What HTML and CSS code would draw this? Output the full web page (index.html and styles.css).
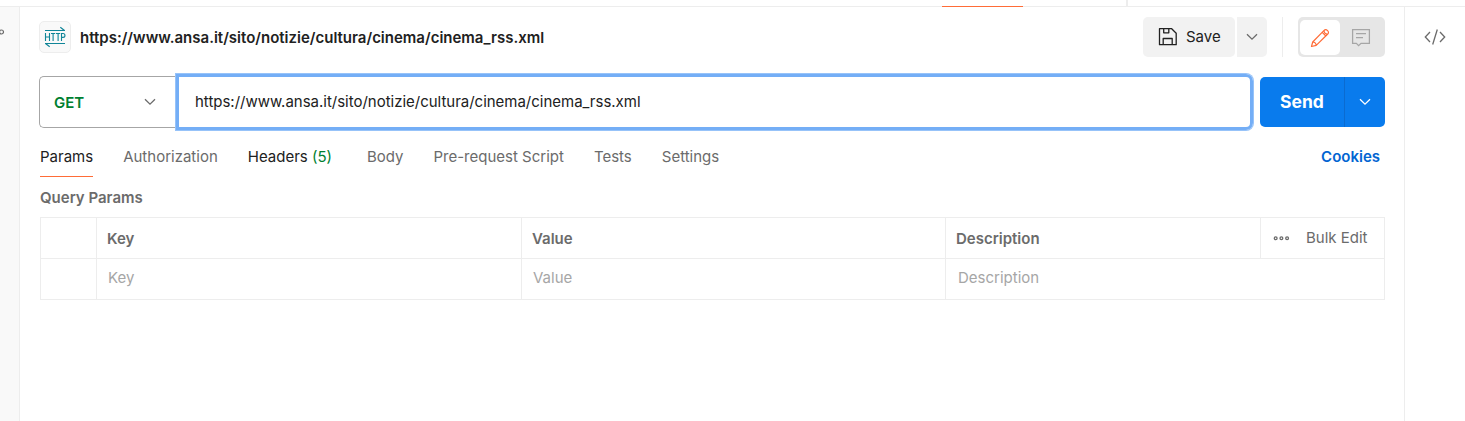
FILE: index.html
```html
<!DOCTYPE html>
<html lang="en">
<head>
<meta charset="utf-8">
<title>Request</title>
<link rel="stylesheet" href="styles.css">
</head>
<body>
<div class="app">
  <div class="tabstrip">
    <span class="tabstrip-active"></span>
    <span class="tabstrip-divider"></span>
  </div>
  <div class="workspace">
    <aside class="sidebar">
      <svg class="sidebar-icon" width="6" height="8" viewBox="0 0 6 8"><circle cx="1.5" cy="4" r="2" fill="none" stroke="#6b6b6b" stroke-width="1.2"/></svg>
    </aside>
    <main class="request">
      <header class="request-head">
        <span class="http-badge">
          <svg width="22" height="22" viewBox="0 0 22 22" fill="none" stroke="#0f8598" stroke-width="1.2">
            <path d="M1 4.500h20M20.500 4.500l-4.200-3.200M21 17.500H1M1.500 17.500l4.200 3.200"/>
            <path d="M1.500 7v8M5.500 7v8M1.500 11h4M7 7.500h4.200M9.100 7.500V15M12 7.500h4.200M14.100 7.500V15M17.500 15V7.500h1.500a1.900 1.900 0 0 1 0 3.900h-1.500" stroke-width="1.100"/>
          </svg>
        </span>
        <h1 class="request-title">https://www.ansa.it/sito/notizie/cultura/cinema/cinema_rss.xml</h1>
        <div class="head-actions">
          <button class="save-button">
            <svg width="20" height="20" viewBox="0 0 20 20" fill="none" stroke="#212121" stroke-width="1.3" stroke-linejoin="round"><path d="M1.500 1.700h12.200l4.500 4.500v11.500H1.500zM5.700 1.700v4.100h5.100V1.700M5.200 17.700v-6.200h9v6.200"/></svg>
            <span>Save</span>
          </button>
          <button class="save-more" aria-label="More save options">
            <svg width="12" height="8" viewBox="0 0 12 8" fill="none" stroke="#6b6b6b" stroke-width="1.3"><path d="M1 1.2l5 5 5-5"/></svg>
          </button>
          <span class="head-divider"></span>
          <div class="mode-toggle">
            <span class="mode mode-active">
              <svg width="20" height="20" viewBox="0 0 20 20" fill="none" stroke="#ff6c37" stroke-width="1.2" stroke-linejoin="round"><path d="M1.500 18.500l1.200-4.500L14.100 2.300a2.250 2.250 0 0 1 3.200 0l.5.5a2.250 2.250 0 0 1 0 3.200L6.200 17.400zM12.200 4.300l3.700 3.700M14.100 2.300c-.3 2.300 1.400 4 3.700 3.700M2.700 14c1.800 0 3.300 1.500 3.500 3.400"/></svg>
            </span>
            <span class="mode">
              <svg width="20" height="20" viewBox="0 0 20 20" fill="none" stroke="#a6a6a6" stroke-width="1.25"><path d="M1.600 1.600h16.800v13.800H10l-2.400 2.300-2.200-2.300H1.600zM5 5.500h10M5 9.500h7"/></svg>
            </span>
          </div>
        </div>
      </header>
      <div class="url-row">
        <div class="method">
          <span class="method-name">GET</span>
          <svg width="12" height="8" viewBox="0 0 12 8" fill="none" stroke="#6b6b6b" stroke-width="1.3"><path d="M1 1.2l5 5 5-5"/></svg>
        </div>
        <div class="url-input"><span>https://www.ansa.it/sito/notizie/cultura/cinema/cinema_rss.xml</span></div>
        <div class="send">
          <button class="send-main">Send</button>
          <button class="send-more" aria-label="More send options">
            <svg width="12" height="8" viewBox="0 0 12 8" fill="none" stroke="#fff" stroke-width="1.3"><path d="M1 1.200l5 5 5-5"/></svg>
          </button>
        </div>
      </div>
      <nav class="tabs">
        <a class="tab tab-active">Params</a>
        <a class="tab">Authorization</a>
        <a class="tab tab-filled">Headers <span class="count">(5)</span></a>
        <a class="tab">Body</a>
        <a class="tab">Pre-request Script</a>
        <a class="tab">Tests</a>
        <a class="tab">Settings</a>
        <a class="cookies">Cookies</a>
      </nav>
      <h2 class="section-title">Query Params</h2>
      <div class="params">
        <div class="row row-head">
          <div class="cell"></div>
          <div class="cell">Key</div>
          <div class="cell">Value</div>
          <div class="cell">Description</div>
          <div class="cell cell-tools">
            <svg width="17" height="6" viewBox="0 0 17 6" fill="none" stroke="#6b6b6b" stroke-width="1.300"><circle cx="2.700" cy="3.300" r="1.400"/><circle cx="8.400" cy="3.300" r="1.400"/><circle cx="14.100" cy="3.300" r="1.400"/></svg>
            <span class="bulk">Bulk Edit</span>
          </div>
        </div>
        <div class="row row-empty">
          <div class="cell"></div>
          <div class="cell">Key</div>
          <div class="cell">Value</div>
          <div class="cell cell-description">Description</div>
        </div>
      </div>
    </main>
    <aside class="rail">
      <svg width="22" height="18" viewBox="0 0 22 18" fill="none" stroke="#6b6b6b" stroke-width="1.300"><path d="M6 4L1.300 9 6 14M16 4l4.700 5L16 14M13.300 1.500l-4.600 15"/></svg>
    </aside>
  </div>
</div>
</body>
</html>
```

FILE: styles.css
```css
* {
  box-sizing: border-box;
}

body {
  margin: 0;
  background: #fff;
  color: #212121;
  font: 15px/20px Inter, "Liberation Sans", sans-serif;
}

button {
  border: 0;
  padding: 0;
  font: inherit;
  color: inherit;
}

svg {
  display: block;
  flex: none;
}

.app {
  width: 1465px;
  height: 421px;
  display: flex;
  flex-direction: column;
  overflow: hidden;
}

.tabstrip {
  height: 7px;
  flex: none;
  display: flex;
  align-items: flex-end;
  padding-left: 942px;
  background: linear-gradient(#ededed, #ededed) bottom / 100% 1px no-repeat;
}

.tabstrip-active {
  width: 81px;
  height: 1px;
  background: #ff6c37;
}

.tabstrip-divider {
  width: 2px;
  height: 7px;
  margin-left: 103px;
  background: #ededed;
}

.workspace {
  flex: 1;
  display: grid;
  grid-template-columns: 20px 1384px 61px;
}

.sidebar {
  background: #f9f9f9;
  border-right: 1px solid #ededed;
  padding-top: 21px;
}

.request {
  padding: 10px 19px 0 20px;
}

.rail {
  border-left: 1px solid #ededed;
  padding: 21px 0 0 19px;
}

.request-head {
  display: flex;
  align-items: center;
  height: 40px;
}

.http-badge {
  width: 32px;
  height: 32px;
  margin-left: -1px;
  display: grid;
  place-items: center;
  border: 1px solid #ededed;
  border-radius: 5px;
  background: #f9f9f9;
}

.request-title {
  margin: 1px 0 0 9px;
  font-size: 15px;
  font-weight: 600;
  white-space: nowrap;
}

.head-actions {
  margin-left: auto;
  height: 40px;
  display: flex;
  align-items: center;
}

.save-button {
  width: 92px;
  height: 40px;
  padding-left: 15px;
  display: flex;
  align-items: center;
  gap: 8px;
  background: #f2f2f2;
  border-radius: 5px;
}

.save-more {
  width: 30px;
  height: 40px;
  margin-left: 2px;
  display: grid;
  place-items: center;
  background: #f2f2f2;
  border-radius: 0 5px 5px 0;
}

.head-divider {
  width: 1px;
  height: 40px;
  margin: 0 15px;
  background: #ededed;
}

.mode-toggle {
  width: 87px;
  height: 40px;
  padding: 3px 2px;
  display: flex;
  background: #e6e6e6;
  border-radius: 5px;
}

.mode {
  width: 42px;
  height: 35px;
  display: grid;
  place-items: center;
}

.mode-active {
  width: 40px;
  background: #fff;
  border-radius: 5px;
}

.url-row {
  display: flex;
  align-items: center;
  height: 58px;
  margin: 16px 0 0 -1px;
}

.method {
  width: 137px;
  height: 52px;
  padding: 0 20px 0 14px;
  display: flex;
  align-items: center;
  justify-content: space-between;
  border: 1px solid #a6a6a6;
  border-right: 0;
  border-radius: 5px 0 0 5px;
  color: #007f31;
  font-weight: 600;
}

.method-name {
  padding-top: 2px;
}

.url-input {
  width: 1077px;
  height: 56px;
  padding-left: 16px;
  display: flex;
  align-items: center;
  border: 3px solid #74aef6;
  border-radius: 0 7px 7px 0;
  box-shadow: 0 0 0 1px #97c3f9;
  letter-spacing: -0.015px;
  white-space: nowrap;
}

.send {
  height: 50px;
  margin-left: 7px;
  display: flex;
  color: #fff;
  background: #097bed;
  border-radius: 5px;
}

.send-main {
  width: 84px;
  background: none;
  font-size: 17.5px;
  font-weight: 700;
}

.send-more {
  width: 41px;
  display: grid;
  place-items: center;
  background: none;
  border-left: 1px solid #0b6bd0;
}

.tabs {
  height: 46px;
  display: flex;
  gap: 30px;
  white-space: nowrap;
  color: #6b6b6b;
}

.tab {
  padding-top: 16px;
}

.tab-active {
  border-bottom: 1px solid #ff6c37;
  color: #212121;
}

.tab-filled {
  margin-right: 5px;
  color: #212121;
}

.count {
  color: #007f31;
}

.cookies {
  margin-left: auto;
  padding: 16px 5px 0 0;
  color: #0265d2;
  font-weight: 600;
}

.section-title {
  margin: 11px 0 9px;
  font-size: 15px;
  line-height: 20px;
  font-weight: 600;
  color: #6b6b6b;
}

.params {
  border: 1px solid #ededed;
  color: #6b6b6b;
}

.row {
  display: grid;
  grid-template-columns: 55px 425px 424px 315px 124px;
  height: 40px;
}

.row-head {
  height: 41px;
  border-bottom: 1px solid #ededed;
  font-weight: 600;
}

.row-empty {
  grid-template-columns: 55px 425px 424px 439px;
  color: #a6a6a6;
}

.cell {
  padding: 11px 0 0 10px;
}

.cell + .cell {
  border-left: 1px solid #ededed;
}

.row-empty .cell {
  padding: 9px 0 0 11px;
}

.row-empty .cell-description {
  padding-left: 12px;
}

.row-head .cell-tools {
  display: flex;
  align-items: center;
  gap: 16px;
  padding: 0 0 1px 12px;
  font-weight: 400;
}
```
